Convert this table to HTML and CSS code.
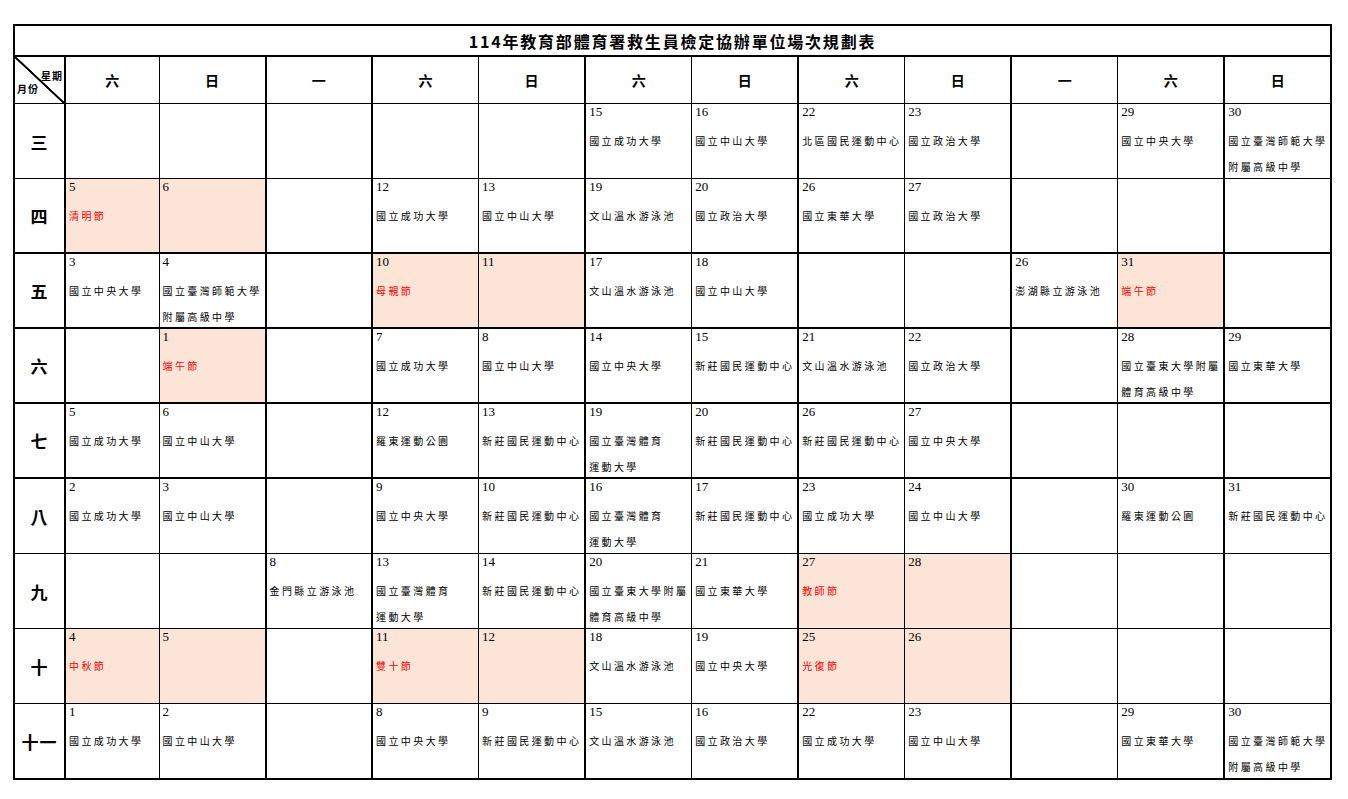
FILE: index.html
```html
<!DOCTYPE html>
<html lang="zh-Hant">
<head>
<meta charset="utf-8">
<title>114年教育部體育署救生員檢定協辦單位場次規劃表</title>
<link rel="stylesheet" href="styles.css">
</head>
<body>
<div class="sheet">
<table class="plan">
<colgroup>
<col class="c-month"><col class="c-first"><col><col><col><col><col><col><col><col><col><col><col>
</colgroup>
<thead>
<tr class="r-title"><th colspan="13" class="title">114年教育部體育署救生員檢定協辦單位場次規劃表</th></tr>
<tr class="r-head">
<th class="corner"><div class="corner-in"><span class="wk">星期</span><span class="mo">月份</span></div></th>
<th class="day">六</th><th class="day thick">日</th><th class="day thick">一</th><th class="day">六</th><th class="day thick">日</th><th class="day">六</th><th class="day thick">日</th><th class="day">六</th><th class="day thick">日</th><th class="day">一</th><th class="day thick">六</th><th class="day">日</th>
</tr>
</thead>
<tbody>
<tr class="row">
<th class="mon">三</th>
<td></td><td class="thick"></td><td class="thick"></td><td></td><td class="thick"></td>
<td><div class="d">15</div><div class="t">國立成功大學</div></td>
<td class="thick"><div class="d">16</div><div class="t">國立中山大學</div></td>
<td><div class="d">22</div><div class="t">北區國民運動中心</div></td>
<td class="thick"><div class="d">23</div><div class="t">國立政治大學</div></td>
<td></td>
<td class="thick"><div class="d">29</div><div class="t">國立中央大學</div></td>
<td><div class="d">30</div><div class="t">國立臺灣師範大學<br>附屬高級中學</div></td>
</tr>
<tr class="row tb">
<th class="mon">四</th>
<td class="hol"><div class="d">5</div><div class="t red">清明節</div></td>
<td class="hol thick"><div class="d">6</div></td>
<td class="thick"></td>
<td><div class="d">12</div><div class="t">國立成功大學</div></td>
<td class="thick"><div class="d">13</div><div class="t">國立中山大學</div></td>
<td><div class="d">19</div><div class="t">文山溫水游泳池</div></td>
<td class="thick"><div class="d">20</div><div class="t">國立政治大學</div></td>
<td><div class="d">26</div><div class="t">國立東華大學</div></td>
<td class="thick"><div class="d">27</div><div class="t">國立政治大學</div></td>
<td></td><td class="thick"></td><td></td>
</tr>
<tr class="row tb">
<th class="mon">五</th>
<td><div class="d">3</div><div class="t">國立中央大學</div></td>
<td class="thick"><div class="d">4</div><div class="t">國立臺灣師範大學<br>附屬高級中學</div></td>
<td class="thick"></td>
<td class="hol"><div class="d">10</div><div class="t red">母親節</div></td>
<td class="hol thick"><div class="d">11</div></td>
<td><div class="d">17</div><div class="t">文山溫水游泳池</div></td>
<td class="thick"><div class="d">18</div><div class="t">國立中山大學</div></td>
<td></td><td class="thick"></td>
<td><div class="d">26</div><div class="t">澎湖縣立游泳池</div></td>
<td class="hol thick"><div class="d">31</div><div class="t red">端午節</div></td>
<td></td>
</tr>
<tr class="row tb">
<th class="mon">六</th>
<td></td>
<td class="hol thick"><div class="d">1</div><div class="t red">端午節</div></td>
<td class="thick"></td>
<td><div class="d">7</div><div class="t">國立成功大學</div></td>
<td class="thick"><div class="d">8</div><div class="t">國立中山大學</div></td>
<td><div class="d">14</div><div class="t">國立中央大學</div></td>
<td class="thick"><div class="d">15</div><div class="t">新莊國民運動中心</div></td>
<td><div class="d">21</div><div class="t">文山溫水游泳池</div></td>
<td class="thick"><div class="d">22</div><div class="t">國立政治大學</div></td>
<td></td>
<td class="thick"><div class="d">28</div><div class="t">國立臺東大學附屬<br>體育高級中學</div></td>
<td><div class="d">29</div><div class="t">國立東華大學</div></td>
</tr>
<tr class="row tb">
<th class="mon">七</th>
<td><div class="d">5</div><div class="t">國立成功大學</div></td>
<td class="thick"><div class="d">6</div><div class="t">國立中山大學</div></td>
<td class="thick"></td>
<td><div class="d">12</div><div class="t">羅東運動公園</div></td>
<td class="thick"><div class="d">13</div><div class="t">新莊國民運動中心</div></td>
<td><div class="d">19</div><div class="t">國立臺灣體育<br>運動大學</div></td>
<td class="thick"><div class="d">20</div><div class="t">新莊國民運動中心</div></td>
<td><div class="d">26</div><div class="t">新莊國民運動中心</div></td>
<td class="thick"><div class="d">27</div><div class="t">國立中央大學</div></td>
<td></td><td class="thick"></td><td></td>
</tr>
<tr class="row">
<th class="mon">八</th>
<td><div class="d">2</div><div class="t">國立成功大學</div></td>
<td class="thick"><div class="d">3</div><div class="t">國立中山大學</div></td>
<td class="thick"></td>
<td><div class="d">9</div><div class="t">國立中央大學</div></td>
<td class="thick"><div class="d">10</div><div class="t">新莊國民運動中心</div></td>
<td><div class="d">16</div><div class="t">國立臺灣體育<br>運動大學</div></td>
<td class="thick"><div class="d">17</div><div class="t">新莊國民運動中心</div></td>
<td><div class="d">23</div><div class="t">國立成功大學</div></td>
<td class="thick"><div class="d">24</div><div class="t">國立中山大學</div></td>
<td></td>
<td class="thick"><div class="d">30</div><div class="t">羅東運動公園</div></td>
<td><div class="d">31</div><div class="t">新莊國民運動中心</div></td>
</tr>
<tr class="row">
<th class="mon">九</th>
<td></td><td class="thick"></td>
<td class="thick"><div class="d">8</div><div class="t">金門縣立游泳池</div></td>
<td><div class="d">13</div><div class="t">國立臺灣體育<br>運動大學</div></td>
<td class="thick"><div class="d">14</div><div class="t">新莊國民運動中心</div></td>
<td><div class="d">20</div><div class="t">國立臺東大學附屬<br>體育高級中學</div></td>
<td class="thick"><div class="d">21</div><div class="t">國立東華大學</div></td>
<td class="hol"><div class="d">27</div><div class="t red">教師節</div></td>
<td class="hol thick"><div class="d">28</div></td>
<td></td><td class="thick"></td><td></td>
</tr>
<tr class="row">
<th class="mon">十</th>
<td class="hol"><div class="d">4</div><div class="t red">中秋節</div></td>
<td class="hol thick"><div class="d">5</div></td>
<td class="thick"></td>
<td class="hol"><div class="d">11</div><div class="t red">雙十節</div></td>
<td class="hol thick"><div class="d">12</div></td>
<td><div class="d">18</div><div class="t">文山溫水游泳池</div></td>
<td class="thick"><div class="d">19</div><div class="t">國立中央大學</div></td>
<td class="hol"><div class="d">25</div><div class="t red">光復節</div></td>
<td class="hol thick"><div class="d">26</div></td>
<td></td><td class="thick"></td><td></td>
</tr>
<tr class="row last">
<th class="mon">十一</th>
<td><div class="d">1</div><div class="t">國立成功大學</div></td>
<td class="thick"><div class="d">2</div><div class="t">國立中山大學</div></td>
<td class="thick"></td>
<td><div class="d">8</div><div class="t">國立中央大學</div></td>
<td class="thick"><div class="d">9</div><div class="t">新莊國民運動中心</div></td>
<td><div class="d">15</div><div class="t">文山溫水游泳池</div></td>
<td class="thick"><div class="d">16</div><div class="t">國立政治大學</div></td>
<td><div class="d">22</div><div class="t">國立成功大學</div></td>
<td class="thick"><div class="d">23</div><div class="t">國立中山大學</div></td>
<td></td>
<td class="thick"><div class="d">29</div><div class="t">國立東華大學</div></td>
<td><div class="d">30</div><div class="t">國立臺灣師範大學<br>附屬高級中學</div></td>
</tr>
</tbody>
</table>
</div>
</body>
</html>
```

FILE: styles.css
```css
html, body {
  margin: 0;
  padding: 0;
  background: #fff;
}
.sheet {
  padding: 24px 0 0 13px;
}
.plan {
  border-collapse: collapse;
  table-layout: fixed;
  width: 1319px;
  border: 2px solid #000;
  font-family: "Noto Sans CJK TC", "Liberation Serif", serif;
  color: #000;
}
.c-month { width: 51px; }
.c-first { width: 94px; }
.plan th, .plan td {
  border: 1px solid #000;
  padding: 0;
}
.r-title th {
  height: 29px;
  border-bottom: 2px solid #000;
}
.title {
  font-size: 16px;
  font-weight: 700;
  letter-spacing: 1.8px;
  text-align: center;
  vertical-align: middle;
}
.r-head th {
  height: 46px;
}
.plan th.thick, .plan td.thick {
  border-right: 2px solid #000;
}
.plan th:first-child {
  border-right: 2px solid #000;
}
.day {
  font-size: 14px;
  font-weight: 700;
  text-align: center;
  vertical-align: middle;
}
.corner {
  background: linear-gradient(to top right, transparent calc(50% - 1.3px), #000 calc(50% - 0.7px), #000 calc(50% + 0.7px), transparent calc(50% + 1.3px));
}
.corner-in {
  display: flex;
  flex-direction: column;
  font-size: 10px;
  font-weight: 700;
  line-height: 13px;
  letter-spacing: 1px;
  padding: 4px 1px 0 2px;
  height: 42px;
  box-sizing: border-box;
  justify-content: flex-start;
}
.wk { align-self: flex-end; margin-top: 6px; }
.mo { align-self: flex-start; }
.row td, .row th {
  height: 74px;
}
.row.tb td, .row.tb th {
  height: 73px;
  border-bottom: 2px solid #000;
}
.row.last td, .row.last th {
  height: 74px;
  border-bottom: 2px solid #000;
}
.mon {
  font-size: 17px;
  font-weight: 600;
  text-align: center;
  vertical-align: middle;
  letter-spacing: 1px;
}
.plan td {
  vertical-align: top;
  padding: 0 2px 0 3px;
}
.hol {
  background: #fce4d6;
}
.d {
  font-family: "Liberation Serif", serif;
  font-size: 13px;
  line-height: 15px;
}
.t {
  margin-top: 9px;
  height: 26px;
  font-size: 10px;
  line-height: 26px;
  letter-spacing: 2.4px;
  white-space: nowrap;
}
.red {
  color: #ff0000;
}
```
